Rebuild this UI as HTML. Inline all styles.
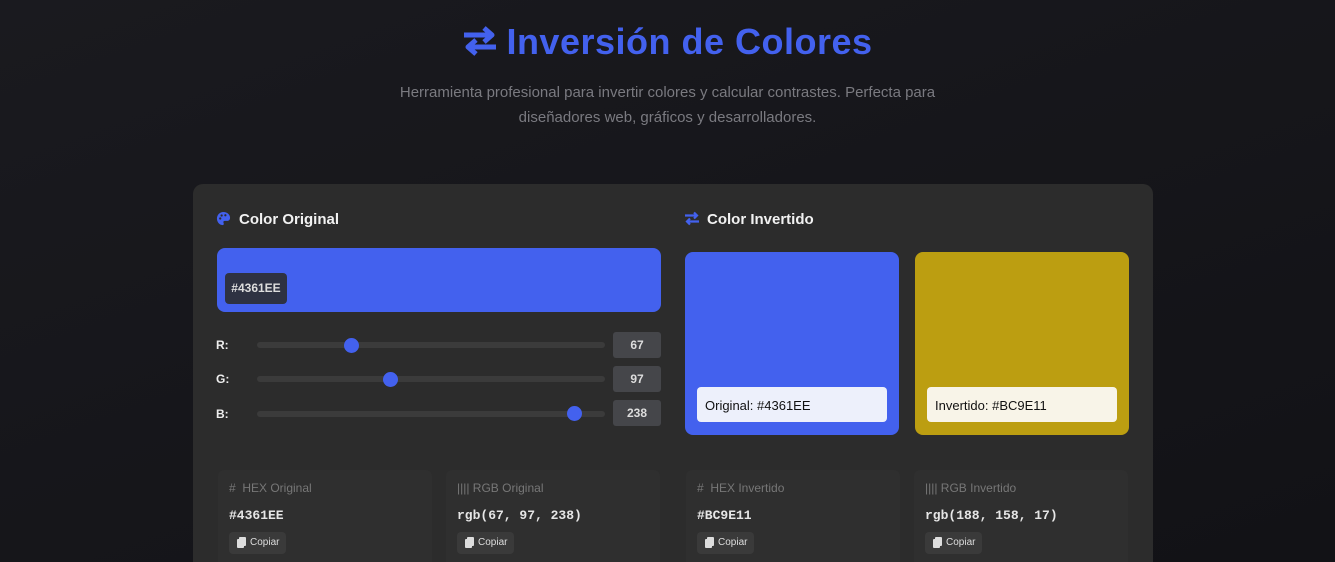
<!DOCTYPE html>
<html style="width:1335px;height:562px;overflow:hidden"><head><meta charset="utf-8"><style>
*{box-sizing:border-box;margin:0;padding:0}
body{width:1335px;height:562px;overflow:hidden;background:linear-gradient(160deg,#1a1a1f,#121216);font-family:"Liberation Sans",sans-serif;position:relative;color:#fff}
.abs{position:absolute}
h1{position:absolute;left:0;width:1335px;top:21px;text-align:center;font-size:36px;font-weight:bold;color:#4361ee;letter-spacing:0.5px}
.sub{position:absolute;left:0;width:1335px;top:80px;text-align:center;font-size:15px;line-height:25px;color:#7a7a80}
.card{left:193px;top:184px;width:960px;height:378px;background:#2c2c2c;border-radius:10px 10px 0 0}
.h{font-size:15px;font-weight:bold;color:#f2f2f2}
.lbl{font-size:12px;font-weight:bold;color:#eee}
.track{height:6px;background:#3b3b3b;border-radius:3px}
.thumb{width:15px;height:15px;border-radius:50%;background:#4361ee}
.val{width:48px;height:26px;background:#45464a;border-radius:3px;font-size:12px;font-weight:bold;color:#ddd;text-align:center;line-height:26px}
.info{background:#2f2f2f;border-radius:6px;width:214px;height:100px}
.it{font-size:12px;color:#777}
.mono{font-family:"Liberation Mono",monospace;font-weight:bold;font-size:13px;color:#e6e6e6}
.btn{height:22px;background:#3a3a3a;border-radius:4px;font-size:10px;color:#ddd;line-height:22px;padding:0 7px 0 21px}
.btn:before{content:"";position:absolute;left:8px;top:7px;width:7px;height:9px;background:#ddd;border-radius:1px;box-shadow:2px -2px 0 #ddd}
</style></head><body>
<h1><svg width="36" height="32" viewBox="0 0 36 32" style="vertical-align:-3px;margin-right:8px"><path d="M2 10H28M22 3l8 7-8 7M34 22H8M14 15l-8 7 8 7" stroke="#4361ee" stroke-width="5" fill="none" stroke-linejoin="round"/></svg>Inversión de Colores</h1>
<div class="sub">Herramienta profesional para invertir colores y calcular contrastes. Perfecta para<br>diseñadores web, gráficos y desarrolladores.</div>
<div class="abs card"></div>
<svg class="abs" style="left:216px;top:211px" width="15" height="15" viewBox="0 0 16 16"><path d="M8 1C4 1 1 4 1 8s3 7 6 7c1.5 0 1.5-1.5 1-2.5s0-2 1.5-2H12c2 0 3-1.5 3-3.5C15 4 12 1 8 1z" fill="#4361ee"/><circle cx="4.5" cy="8" r="1.2" fill="#2c2c2c"/><circle cx="6" cy="4.8" r="1.2" fill="#2c2c2c"/><circle cx="10" cy="4.5" r="1.2" fill="#2c2c2c"/></svg>
<div class="abs h" style="left:239px;top:211px">Color Original</div>
<div class="abs" style="left:217px;top:248px;width:444px;height:64px;background:#4361ee;border-radius:8px"></div>
<div class="abs" style="left:225px;top:273px;width:62px;height:31px;background:#2e3242;border-radius:4px;font-size:12px;font-weight:bold;color:#ddd;line-height:31px;text-align:center">#4361EE</div>
<div class="abs lbl" style="left:216px;top:338px">R:</div>
<div class="abs track" style="left:257px;top:342px;width:348px"></div>
<div class="abs thumb" style="left:344px;top:338px"></div>
<div class="abs val" style="left:613px;top:332px">67</div>
<div class="abs lbl" style="left:216px;top:372px">G:</div>
<div class="abs track" style="left:257px;top:376px;width:348px"></div>
<div class="abs thumb" style="left:383px;top:372px"></div>
<div class="abs val" style="left:613px;top:366px">97</div>
<div class="abs lbl" style="left:216px;top:407px">B:</div>
<div class="abs track" style="left:257px;top:411px;width:348px"></div>
<div class="abs thumb" style="left:567px;top:406px"></div>
<div class="abs val" style="left:613px;top:400px">238</div>
<svg class="abs" style="left:684px;top:211px" width="16" height="15" viewBox="0 0 16 15"><path d="M1 4.5H13M10 1.5l3 3-3 3M15 10.5H3M6 7.5l-3 3 3 3" stroke="#4361ee" stroke-width="2.2" fill="none"/></svg>
<div class="abs h" style="left:707px;top:211px">Color Invertido</div>
<div class="abs" style="left:685px;top:252px;width:214px;height:183px;background:#4361ee;border-radius:8px"></div>
<div class="abs" style="left:697px;top:387px;width:190px;height:35px;background:#edf0fb;border-radius:4px;font-size:13px;color:#111;line-height:37px;padding-left:8px">Original: #4361EE</div>
<div class="abs" style="left:915px;top:252px;width:214px;height:183px;background:#bc9e11;border-radius:8px"></div>
<div class="abs" style="left:927px;top:387px;width:190px;height:35px;background:#f8f4e8;border-radius:4px;font-size:13px;color:#111;line-height:37px;padding-left:8px">Invertido: #BC9E11</div>

<div class="abs info" style="left:218px;top:470px"></div>
<div class="abs it" style="left:229px;top:481px"># &nbsp;HEX Original</div>
<div class="abs mono" style="left:229px;top:508px">#4361EE</div>
<div class="abs btn" style="left:229px;top:532px">Copiar</div>
<div class="abs info" style="left:446px;top:470px"></div>
<div class="abs it" style="left:457px;top:481px">|||| RGB Original</div>
<div class="abs mono" style="left:457px;top:508px">rgb(67, 97, 238)</div>
<div class="abs btn" style="left:457px;top:532px">Copiar</div>
<div class="abs info" style="left:686px;top:470px"></div>
<div class="abs it" style="left:697px;top:481px"># &nbsp;HEX Invertido</div>
<div class="abs mono" style="left:697px;top:508px">#BC9E11</div>
<div class="abs btn" style="left:697px;top:532px">Copiar</div>
<div class="abs info" style="left:914px;top:470px"></div>
<div class="abs it" style="left:925px;top:481px">|||| RGB Invertido</div>
<div class="abs mono" style="left:925px;top:508px">rgb(188, 158, 17)</div>
<div class="abs btn" style="left:925px;top:532px">Copiar</div>
</body></html>
